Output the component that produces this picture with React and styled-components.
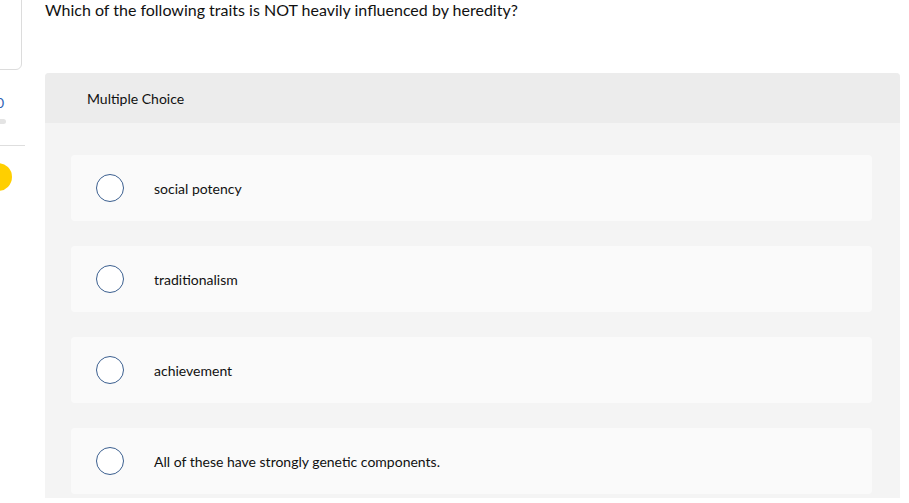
import React from "react";
import styled, { createGlobalStyle } from "styled-components";

const Global = createGlobalStyle`
  html, body { margin: 0; padding: 0; background: #ffffff; }
  body { font-family: "Lato", "Open Sans", sans-serif; color: #111111; overflow: hidden; }
`;

const Page = styled.div`
  display: flex;
  width: 909px;
  height: 503px;
  overflow: hidden;
`;

const Sidebar = styled.aside`
  width: 26px;
  flex: none;
  display: flex;
  flex-direction: column;
  overflow: hidden;
`;

const SideCard = styled.div`
  height: 72px;
  margin-top: -4px;
  margin-left: -40px;
  margin-right: 4px;
  border: 1px solid #dcdcdc;
  border-radius: 0 0 6px 0;
  background: #fff;
  flex: none;
`;

const SideValue = styled.div`
  margin-top: 26px;
  font-size: 14px;
  line-height: 14px;
  color: #2f63b6;
  margin-left: -4px;
`;

const SideBar = styled.div`
  margin-top: 9px;
  width: 6px;
  height: 5px;
  background: #e4e4e4;
  border-radius: 0 3px 3px 0;
`;

const SideRule = styled.div`
  margin-top: 21px;
  height: 1px;
  width: 25px;
  background: #dedede;
`;

const SideDot = styled.div`
  margin-top: 17px;
  margin-left: -16px;
  width: 28px;
  height: 28px;
  border-radius: 50%;
  background: #ffcf00;
  flex: none;
`;

const Main = styled.main`
  flex: 1;
  margin-left: 19px;
  margin-right: 9px;
  display: flex;
  flex-direction: column;
`;

const Question = styled.h1`
  margin: 0;
  height: 73px;
  font-size: 16px;
  line-height: 20px;
  font-weight: 400;
  color: #111111;
  flex: none;
`;

const Panel = styled.section`
  background: #f4f4f4;
  border-radius: 4px 4px 0 0;
  overflow: hidden;
  padding-bottom: 4px;
`;

const PanelHeader = styled.div`
  height: 50px;
  background: #ececec;
  display: flex;
  align-items: center;
  padding-left: 42px;
  font-size: 14px;
  color: #111111;
`;

const OptionList = styled.div`
  display: flex;
  flex-direction: column;
  gap: 25px;
  padding: 32px 28px 0 26px;
`;

const Option = styled.label`
  height: 66px;
  background: #fafafa;
  border-radius: 4px;
  display: flex;
  align-items: center;
  padding-left: 25px;
  font-size: 14px;
  color: #111111;
  cursor: pointer;
`;

const Radio = styled.span`
  width: 26px;
  height: 26px;
  border: 1.5px solid #3b5f8f;
  border-radius: 50%;
  background: #fff;
  flex: none;
  margin-right: 30px;
`;

const options = [
  "social potency",
  "traditionalism",
  "achievement",
  "All of these have strongly genetic components.",
];

export default function App() {
  return (
    <>
      <Global />
      <Page>
        <Sidebar>
          <SideCard />
          <SideValue>0</SideValue>
          <SideBar />
          <SideRule />
          <SideDot />
        </Sidebar>
        <Main>
          <Question>Which of the following traits is NOT heavily influenced by heredity?</Question>
          <Panel>
            <PanelHeader>Multiple Choice</PanelHeader>
            <OptionList>
              {options.map((o) => (
                <Option key={o}>
                  <Radio />
                  {o}
                </Option>
              ))}
            </OptionList>
          </Panel>
        </Main>
      </Page>
    </>
  );
}
